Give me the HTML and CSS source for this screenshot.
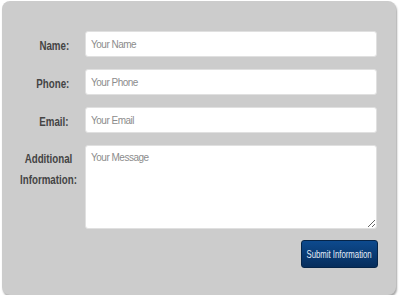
FILE: index.html
```html
<!DOCTYPE html>
<html lang="en">
<head>
    <meta charset="UTF-8">
    <title>Contact Form</title>
    <link rel="stylesheet" href="styles.css">
</head>
<body>
    <form class="panel">
        <label for="name" class="field-label"><span>Name:</span></label>
        <input type="text" id="name" placeholder="Your Name">

        <label for="phone" class="field-label"><span>Phone:</span></label>
        <input type="text" id="phone" placeholder="Your Phone">

        <label for="email" class="field-label"><span>Email:</span></label>
        <input type="text" id="email" placeholder="Your Email">

        <label for="message" class="field-label multi"><span>Additional<br>Information:</span></label>
        <textarea id="message" placeholder="Your Message"></textarea>

        <div class="actions">
            <button type="button"><span>Submit Information</span></button>
        </div>
    </form>
</body>
</html>
```

FILE: styles.css
```css
body {
    margin: 0;
    background-color: #fff;
    font-family: 'Liberation Sans', Arial, sans-serif;
}
.panel {
    box-sizing: border-box;
    width: 394px;
    height: 294px;
    margin: 1px 0 0 2px;
    padding: 30px 19px 0 0;
    background-color: #cccccc;
    border-radius: 8px;
    box-shadow: 1px 2px 2px rgba(0,0,0,0.35);
    display: grid;
    grid-template-columns: 67px 292px;
    grid-template-rows: 26px 26px 26px 84px auto;
    column-gap: 16px;
    row-gap: 12px;
    align-items: start;
}
.field-label {
    font-size: 12.5px;
    font-weight: bold;
    color: #444;
    text-align: right;
    line-height: 30px;
    white-space: nowrap;
}
.field-label span {
    display: inline-block;
    transform: scaleX(0.78);
    transform-origin: right center;
}
.field-label.multi {
    text-align: center;
    line-height: 21px;
    padding-top: 4px;
    margin-right: -26px;
}
.field-label.multi span {
    transform-origin: center center;
}
input, textarea {
    box-sizing: border-box;
    width: 292px;
    border: 1px solid #e0e0e0;
    border-radius: 3px;
    background-color: #fff;
    font-family: inherit;
    font-size: 10px;
    letter-spacing: -0.5px;
    color: #333;
    padding: 0 5px;
    margin: 0;
    outline: none;
}
input {
    height: 26px;
}
textarea {
    height: 84px;
    padding-top: 6px;
    resize: vertical;
}
::placeholder {
    color: #8c8c8c;
}
.actions {
    grid-column: 2;
    display: flex;
    justify-content: flex-end;
    margin-right: -1px;
}
button {
    width: 77px;
    height: 28px;
    padding: 0;
    margin-top: -1px;
    display: flex;
    align-items: center;
    justify-content: center;
    font-family: inherit;
    font-size: 10.5px;
    color: #e6edf8;
    white-space: nowrap;
    background: linear-gradient(#0d4a8e, #062d5c);
    border: 1px solid #052448;
    border-radius: 3px;
    cursor: pointer;
}
button span {
    flex: none;
    display: inline-block;
    transform: scaleX(0.74);
}
```
